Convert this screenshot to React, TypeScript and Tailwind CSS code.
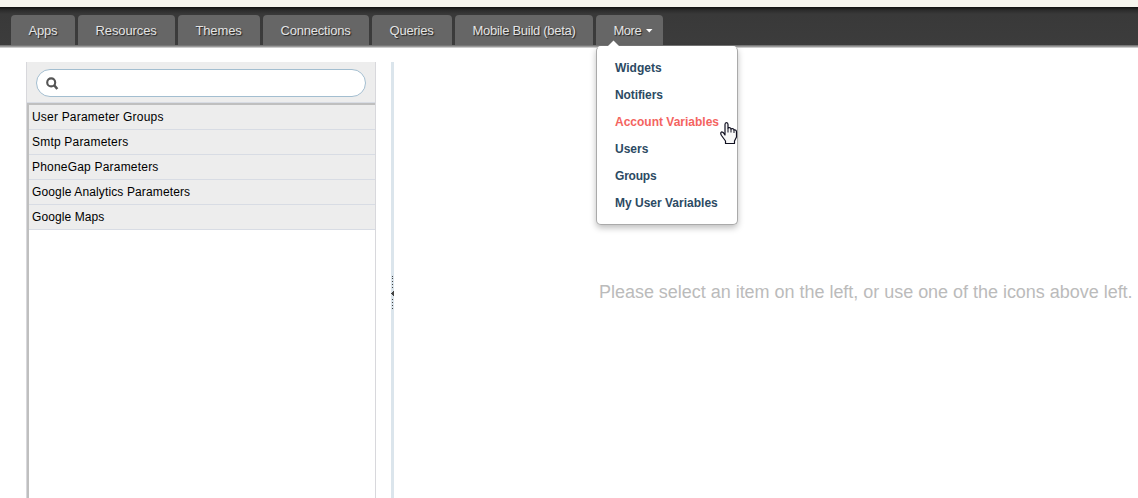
import React from "react";

const tabs = [
  { label: "Apps", box: "w-16", text: "tracking-[-0.2px]" },
  { label: "Resources", box: "w-[97px]", text: "tracking-[-0.1px]" },
  { label: "Themes", box: "w-[82px]", text: "tracking-[-0.15px]" },
  { label: "Connections", box: "w-[106px]", text: "tracking-[-0.2px]" },
  { label: "Queries", box: "w-20", text: "tracking-[-0.2px]" },
  { label: "Mobile Build (beta)", box: "w-[138px]", text: "tracking-[-0.28px]" },
];

const groups = [
  { label: "User Parameter Groups", text: "tracking-[0.2px]" },
  { label: "Smtp Parameters", text: "tracking-[0.2px]" },
  { label: "PhoneGap Parameters", text: "tracking-[0.2px]" },
  { label: "Google Analytics Parameters", text: "tracking-[0.13px]" },
  { label: "Google Maps", text: "tracking-[0.1px]" },
];

const menu = [
  { label: "Widgets", text: "text-[#2c4a63]" },
  { label: "Notifiers", text: "text-[#2c4a63] tracking-[-0.1px]" },
  { label: "Account Variables", text: "text-[#f4645f]" },
  { label: "Users", text: "text-[#2c4a63]" },
  { label: "Groups", text: "text-[#2c4a63] tracking-[-0.2px]" },
  { label: "My User Variables", text: "text-[#2c4a63]" },
];

const tabStyle =
  "flex h-[30px] shrink-0 items-center rounded-t-[4px] bg-[#666] pl-[17.5px] pt-px text-[13px] text-[#e4e4e4] whitespace-nowrap [text-shadow:1px_1px_1px_#222]";

function MoreMenu() {
  return (
    <div className="absolute left-0 top-[31px] z-10 w-[142px] rounded-[5px] border border-[#aaa] border-t-white bg-white pb-[8px] pt-[7px] shadow-[0_3px_6px_rgba(0,0,0,0.25)]">
      <svg className="absolute left-[10px] top-[-7px]" width="13" height="7" viewBox="0 0 13 7">
        <path d="M0 7L6.5 0.5L13 7Z" fill="white" />
      </svg>
      {menu.map((m) => (
        <div key={m.label} className={"flex h-[27px] items-center pl-[18px] text-[12px] font-bold whitespace-nowrap " + m.text}>
          {m.label}
        </div>
      ))}
      <svg className="absolute left-[123px] top-[75px]" width="18" height="24" viewBox="0 0 18 24">
        <path
          d="M5 13V2.5Q5 0.6 6.5 0.6Q8 0.6 8 2.5V6Q10.5 5 11 7Q13.5 6 14 8Q16.5 7.5 16.5 10V15L14.5 19V21.5H5.5V19L1.5 13.5Q0 11 1.5 10Q3 9.5 5 13Z"
          fill="#f8f8f8" stroke="#101020" strokeWidth="1.2" strokeLinejoin="round"
        />
        <path d="M8 6V10.5M11 7V10.5M14 8V11" stroke="#101020" fill="none" />
      </svg>
    </div>
  );
}

export default function App() {
  return (
    <div className="flex h-[498px] w-full flex-col overflow-hidden bg-white font-['Liberation_Sans',Arial,sans-serif]">
      <div className="h-[7px] shrink-0 bg-[#f6f5ee]" />
      <nav className="flex h-[39px] shrink-0 gap-[3px] border-b border-[#777] bg-[linear-gradient(#111_0px,#2b2b2b_3px,#393939_7px,#3c3c3c_38px)] pl-[11px] pt-2 shadow-[0_1px_0_#999,0_2px_0_#ccc]">
        {tabs.map((t) => (
          <a key={t.label} className={tabStyle + " " + t.box + " " + t.text}>
            {t.label}
          </a>
        ))}
        <div className="relative">
          <a className={tabStyle + " w-[67px] gap-[5px] tracking-[-0.5px]"}>
            More
            <svg width="7" height="4" viewBox="0 0 7 4">
              <path d="M0 0H6.5L3.25 3.5Z" fill="white" />
            </svg>
          </a>
          <MoreMenu />
        </div>
      </nav>
      <main className="flex min-h-0 flex-1 pl-[26px] pt-4">
        <aside className="flex w-[350px] shrink-0 flex-col border-x border-[#d8d8dc]">
          <div className="h-[41px] shrink-0 border-b border-[#d8dce4] bg-[#ededed] px-[9px] pt-[7px]">
            <div className="flex h-7 items-center rounded-full border border-[#a3bed0] bg-white pl-[9px]">
              <svg width="13" height="13" viewBox="0 0 13 13" fill="none" stroke="#555">
                <circle cx="5.2" cy="5.4" r="4" strokeWidth="2.1" />
                <path d="M8 8L11.3 12" strokeWidth="2.6" />
              </svg>
            </div>
          </div>
          <div className="flex-1 border-l-2 border-t-2 border-[#bfbfbf]">
            {groups.map((g) => (
              <div key={g.label} className={"flex h-[25px] items-center border-b border-[#d8dce4] bg-[#ededed] pl-[3px] text-[12px] text-black whitespace-nowrap " + g.text}>
                {g.label}
              </div>
            ))}
          </div>
        </aside>
        <div className="ml-[15px] w-[3px] shrink-0 bg-[#dbe5ec]">
          <svg className="mt-[214px]" width="3" height="34" viewBox="0 0 3 34" fill="#444" shapeRendering="crispEdges">
            <path d="M1 0h1v1h-1zM1 2h1v1h-1zM1 5h1v1h-1zM1 8h1v1h-1zM1 11h1v1h-1zM0 17h1v1h-1zM1 16h1v3h-1zM2 15h1v5h-1zM1 23h1v1h-1zM1 26h1v1h-1zM1 29h1v1h-1zM1 32h1v1h-1z" />
          </svg>
        </div>
        <section className="flex-1 pl-[205px] pt-[218px] text-[18px] leading-6 tracking-[-0.025px] text-[#bbb] whitespace-nowrap">
          Please select an item on the left, or use one of the icons above left.
        </section>
      </main>
    </div>
  );
}
